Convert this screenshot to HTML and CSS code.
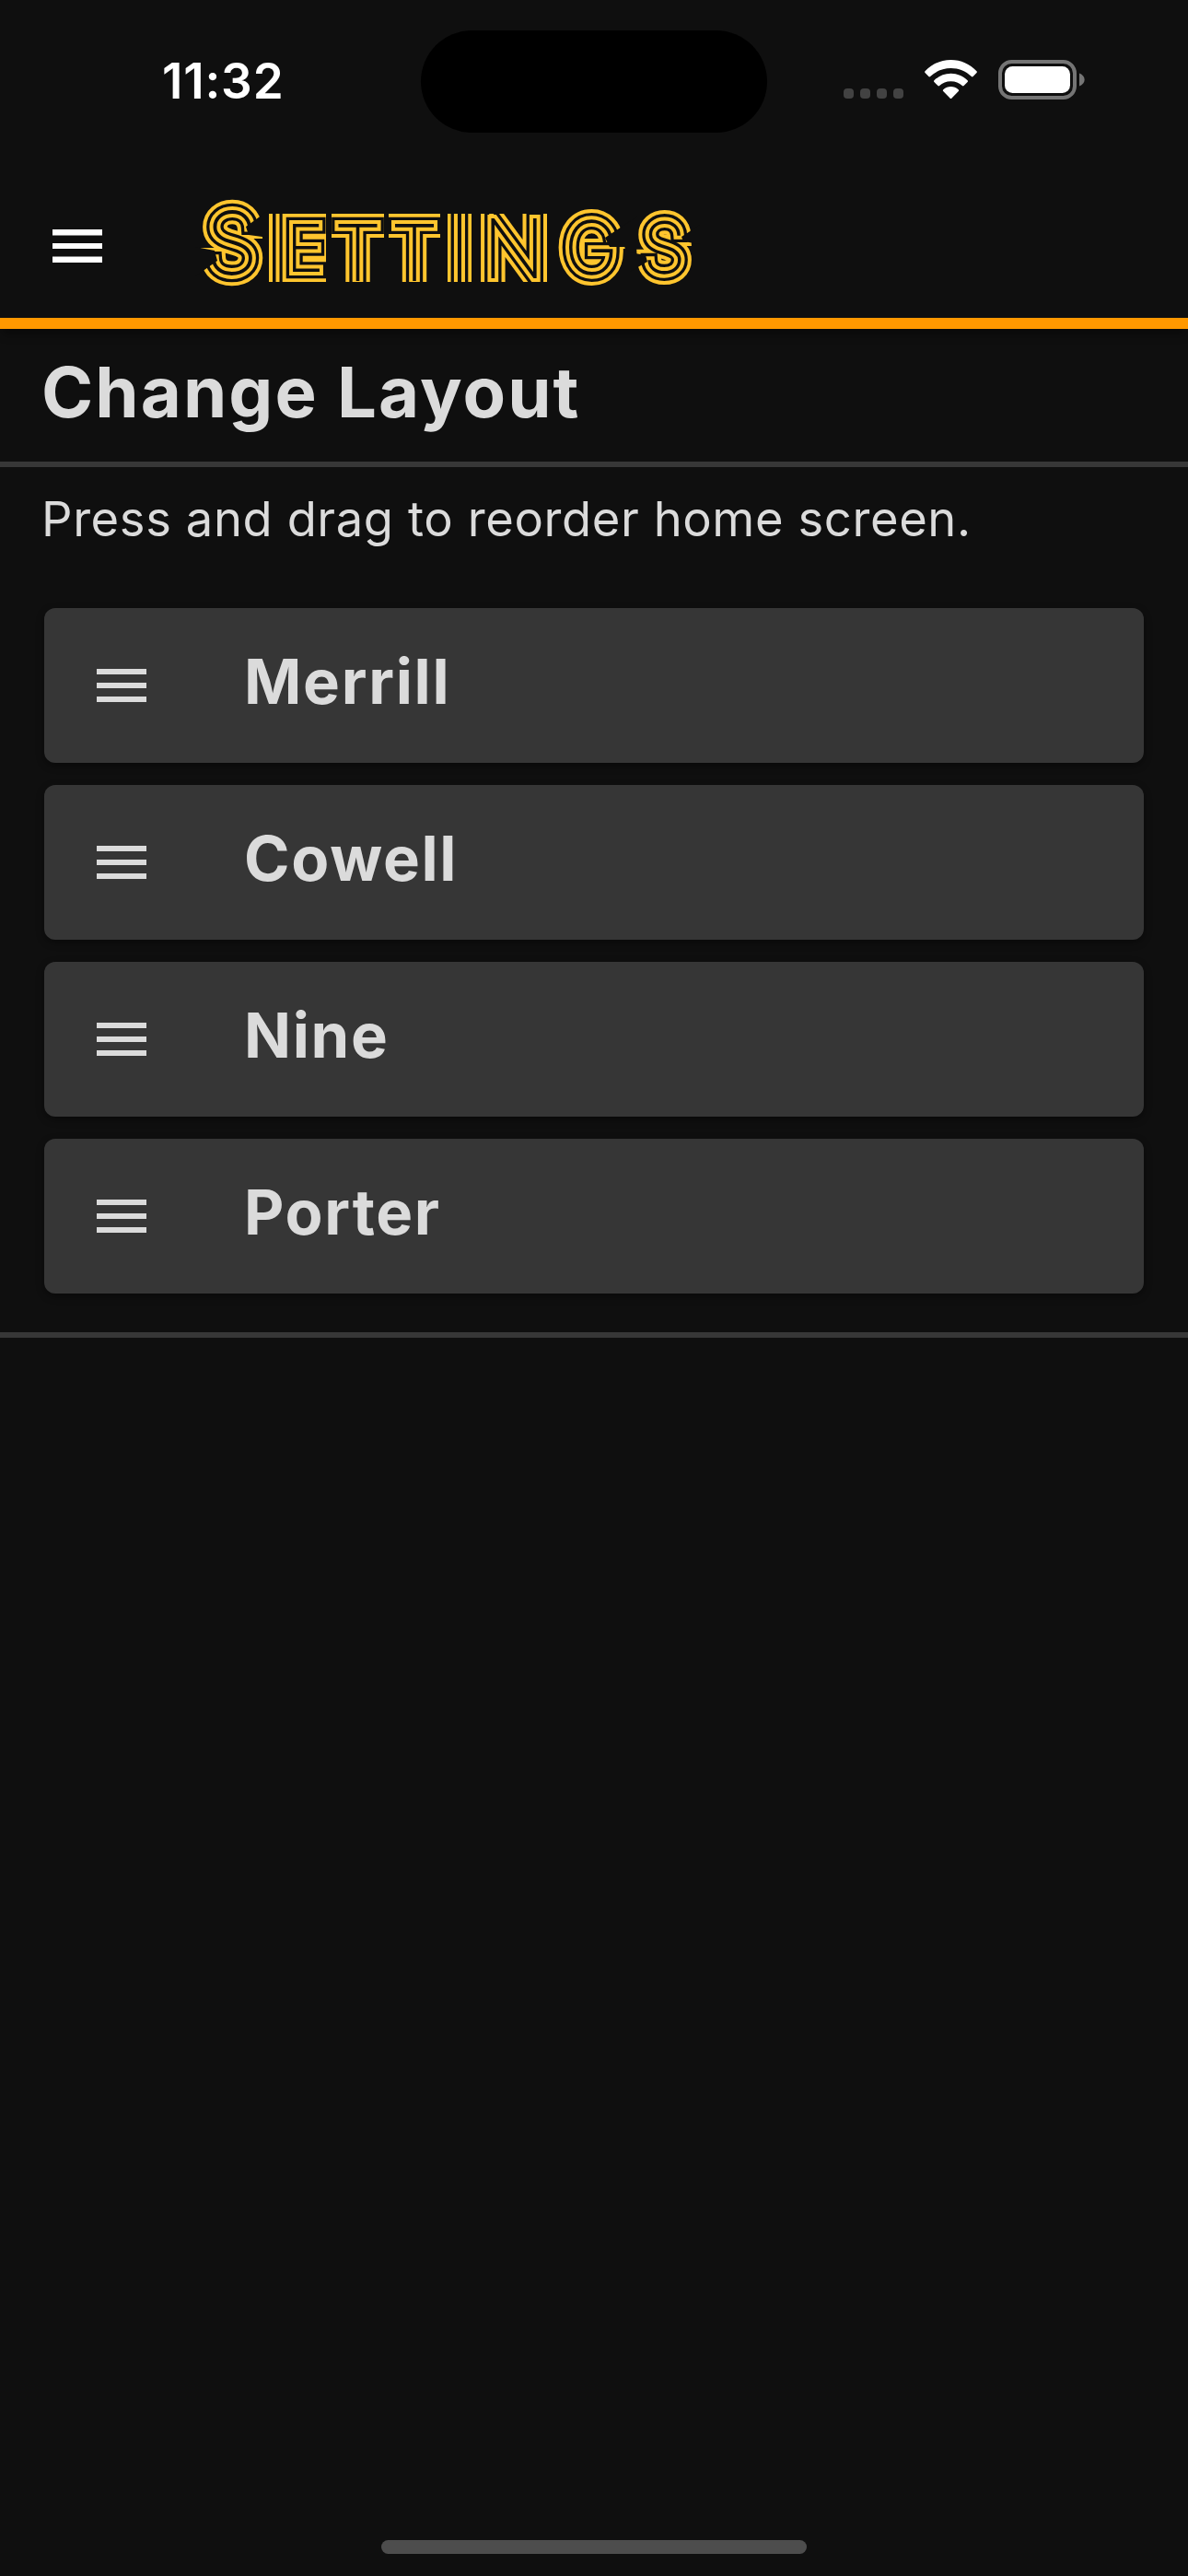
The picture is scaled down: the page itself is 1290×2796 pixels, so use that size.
FILE: index.html
```html
<!DOCTYPE html>
<html lang="en">
<head>
<meta charset="utf-8">
<title>Settings</title>
<link rel="stylesheet" href="styles.css">
</head>
<body>
<div class="screen">
  <div class="status-bar">
    <div class="time">11:32</div>
    <div class="island"></div>
    <div class="indicators">
      <svg class="signal" viewBox="0 0 65 11"><rect width="11" height="11" rx="4"/><rect x="18" width="11" height="11" rx="4"/><rect x="36" width="11" height="11" rx="4"/><rect x="54" width="11" height="11" rx="4"/></svg>
      <svg class="wifi" viewBox="0 0 57 42"><path d="M.5 12.2C8 4.500 17.500 0 28.500 0S49 4.500 56.500 12.200Q57.300 13 56.500 13.900L52.600 18Q51.800 18.800 50.900 18C44.500 12 37 9 28.500 9S12.500 12 6.100 18Q5.200 18.800 4.400 18L.5 13.900Q-.3 13 .5 12.200Z"/><path d="M10.400 22.200C15.500 17.500 21.500 14.700 28.500 14.700S41.500 17.500 46.600 22.200Q47.500 23 46.600 23.900L42.600 28.100Q41.800 28.900 40.900 28.100C37.400 25 33.500 23.300 28.500 23.300S19.600 25 16.100 28.100Q15.200 28.900 14.400 28.100L10.400 23.900Q9.500 23 10.400 22.200Z"/><path d="M20.300 32.300C25 28 32 28 36.700 32.300Q37.600 33.200 36.800 34L29.500 41.500Q28.500 42.500 27.500 41.500L20.200 34Q19.400 33.200 20.300 32.300Z"/></svg>
      <svg class="battery" viewBox="0 0 95 43"><rect class="shell" x="2" y="2" width="81" height="39" rx="12.500"/><rect class="charge" x="7" y="7" width="71" height="29" rx="8.500"/><path class="tip" d="M88 14.500C95.500 17 95.500 26 88 28.500Z"/></svg>
    </div>
  </div>

  <header class="app-bar">
    <svg class="menu" viewBox="0 0 54 36"><path d="M0 0h54v6.500H0zM0 15h54v6H0zM0 29.500h54v6.500H0z"/></svg>
    <svg class="title" viewBox="210 200 560 130" role="heading" aria-label="Settings">
      <g class="line-outer"><text id="word"><tspan class="cap" x="252" y="297">S</tspan><tspan class="e" x="331" y="293.800">E</tspan><tspan class="t" x="388.500" y="304">T</tspan><tspan class="t" x="450" y="304">T</tspan><tspan class="i" x="499" y="306">I</tspan><tspan class="n" x="558" y="300.500">N</tspan><tspan class="g" x="642" y="296.800">G</tspan><tspan class="s" x="721.500" y="296">S</tspan></text></g>
      <use class="gap-outer" href="#word"/>
      <use class="line-inner" href="#word"/>
      <use class="gap-inner" href="#word"/>
      <path class="trim" d="M290 200h307v32h-307zM290 306h307v24h-307zM354 230h6v78h-6zM417 230h5v78h-5zM478 230h8v78h-8zM512 230h9v78h-9zM595 230h3v78h-3z"/>
      <path class="trim" d="M292 228L267 246L270 255L292 258zM212 300L236 283L233 272L212 268zM692 235L657 258L662 268L692 268zM760 244L740 257L742 262L760 265zM684 295L703 284L701 277L684 274z"/>
      <path class="stripe" d="M292 232h4v74h-4zM299.500 232h4v74h-4z"/>
    </svg>
  </header>

  <main>
    <h2 class="section-title">Change Layout</h2>
    <section class="layout">
      <p class="hint">Press and drag to reorder home screen.</p>
      <ul class="rows">
        <li class="row"><svg class="handle" viewBox="0 0 54 36"><path d="M0 0h54v6H0zM0 15h54v6H0zM0 30h54v6H0z"/></svg><span class="name">Merrill</span></li>
        <li class="row"><svg class="handle" viewBox="0 0 54 36"><path d="M0 0h54v6H0zM0 15h54v6H0zM0 30h54v6H0z"/></svg><span class="name">Cowell</span></li>
        <li class="row"><svg class="handle" viewBox="0 0 54 36"><path d="M0 0h54v6H0zM0 15h54v6H0zM0 30h54v6H0z"/></svg><span class="name">Nine</span></li>
        <li class="row"><svg class="handle" viewBox="0 0 54 36"><path d="M0 0h54v6H0zM0 15h54v6H0zM0 30h54v6H0z"/></svg><span class="name">Porter</span></li>
      </ul>
    </section>
  </main>
  <div class="home-bar"></div>
</div>
</body>
</html>
```
FILE: styles.css
```css
* { box-sizing: border-box; margin: 0; padding: 0; }
body { background: #0f0f0f; color: #dbdbdb; font-family: Inter, "Liberation Sans", sans-serif; }
svg { display: block; flex: none; fill: currentColor; }
.screen { width: 1290px; height: 2796px; display: flex; flex-direction: column; overflow: hidden; }

.status-bar { height: 177px; display: grid; grid-template-columns: 457px 376px 1fr; align-items: start; color: #fff; }
.time { padding: 56px 0 0 176px; font-size: 53px; line-height: 64px; font-weight: 600; letter-spacing: .8px; }
.island { height: 111px; margin-top: 33px; border-radius: 56px; background: #000; }
.indicators { display: flex; align-items: flex-end; height: 108px; padding-left: 83px; }
.signal { width: 65px; height: 11px; margin: 0 23px 1px 0; color: #424242; }
.wifi { width: 57px; height: 42px; margin: 0 23px 1px 0; }
.battery { width: 95px; height: 43px; }
.shell { fill: none; stroke: #757575; stroke-width: 4; }
.tip { fill: #757575; }

.app-bar { height: 180px; display: flex; align-items: flex-start; padding: 23px 0 0 57px; border-bottom: 12px solid #ff9800; box-shadow: 0 9px 9px -3px rgba(0, 0, 0, .35); }
.menu { width: 54px; height: 36px; margin-top: 49px; color: #fff; }
.title { width: 560px; height: 130px; margin-left: 99px; }
.title text { font-family: Inter, sans-serif; font-weight: 100; text-anchor: middle; }
.cap { font-size: 92px; }
.e { font-size: 68px; }
.t { font-size: 82px; }
.i { font-size: 100px; }
.n { font-size: 87px; }
.g { font-size: 78px; }
.s { font-size: 75px; }
.line-outer { fill: #ffc52e; stroke: #ffc52e; stroke-width: 24.500px; }
.gap-outer { fill: #0f0f0f; stroke: #0f0f0f; stroke-width: 16.500px; }
.line-inner { fill: #ffc52e; stroke: #ffc52e; stroke-width: 9.800px; }
.gap-inner { fill: #0f0f0f; stroke: #0f0f0f; stroke-width: 1.800px; }
.trim { fill: #0f0f0f; }
.stripe { fill: #ffc52e; }

.section-title { height: 150px; padding: 22px 0 0 45px; border-bottom: 6px solid #373737; font-size: 76px; line-height: 92px; font-weight: 700; letter-spacing: 2.100px; }
.layout { height: 945px; padding: 24px 48px 0; border-bottom: 6px solid #373737; }
.hint { height: 129px; margin-left: -3px; font-size: 52.500px; line-height: 64px; letter-spacing: .600px; white-space: nowrap; }
.rows { list-style: none; display: flex; flex-direction: column; gap: 24px; }
.row { height: 168px; display: flex; align-items: flex-start; padding: 39px 57px 0; border-radius: 12px; background: #363636; box-shadow: 0 3px 9px rgba(0, 0, 0, .4); }
.handle { width: 54px; height: 36px; margin: 27px 106px 0 0; }
.name { font-size: 67px; line-height: 82px; font-weight: 700; letter-spacing: 1.700px; }
.home-bar { width: 462px; height: 15px; margin: auto auto 24px; border-radius: 8px; background: #4d4d4d; }
```
